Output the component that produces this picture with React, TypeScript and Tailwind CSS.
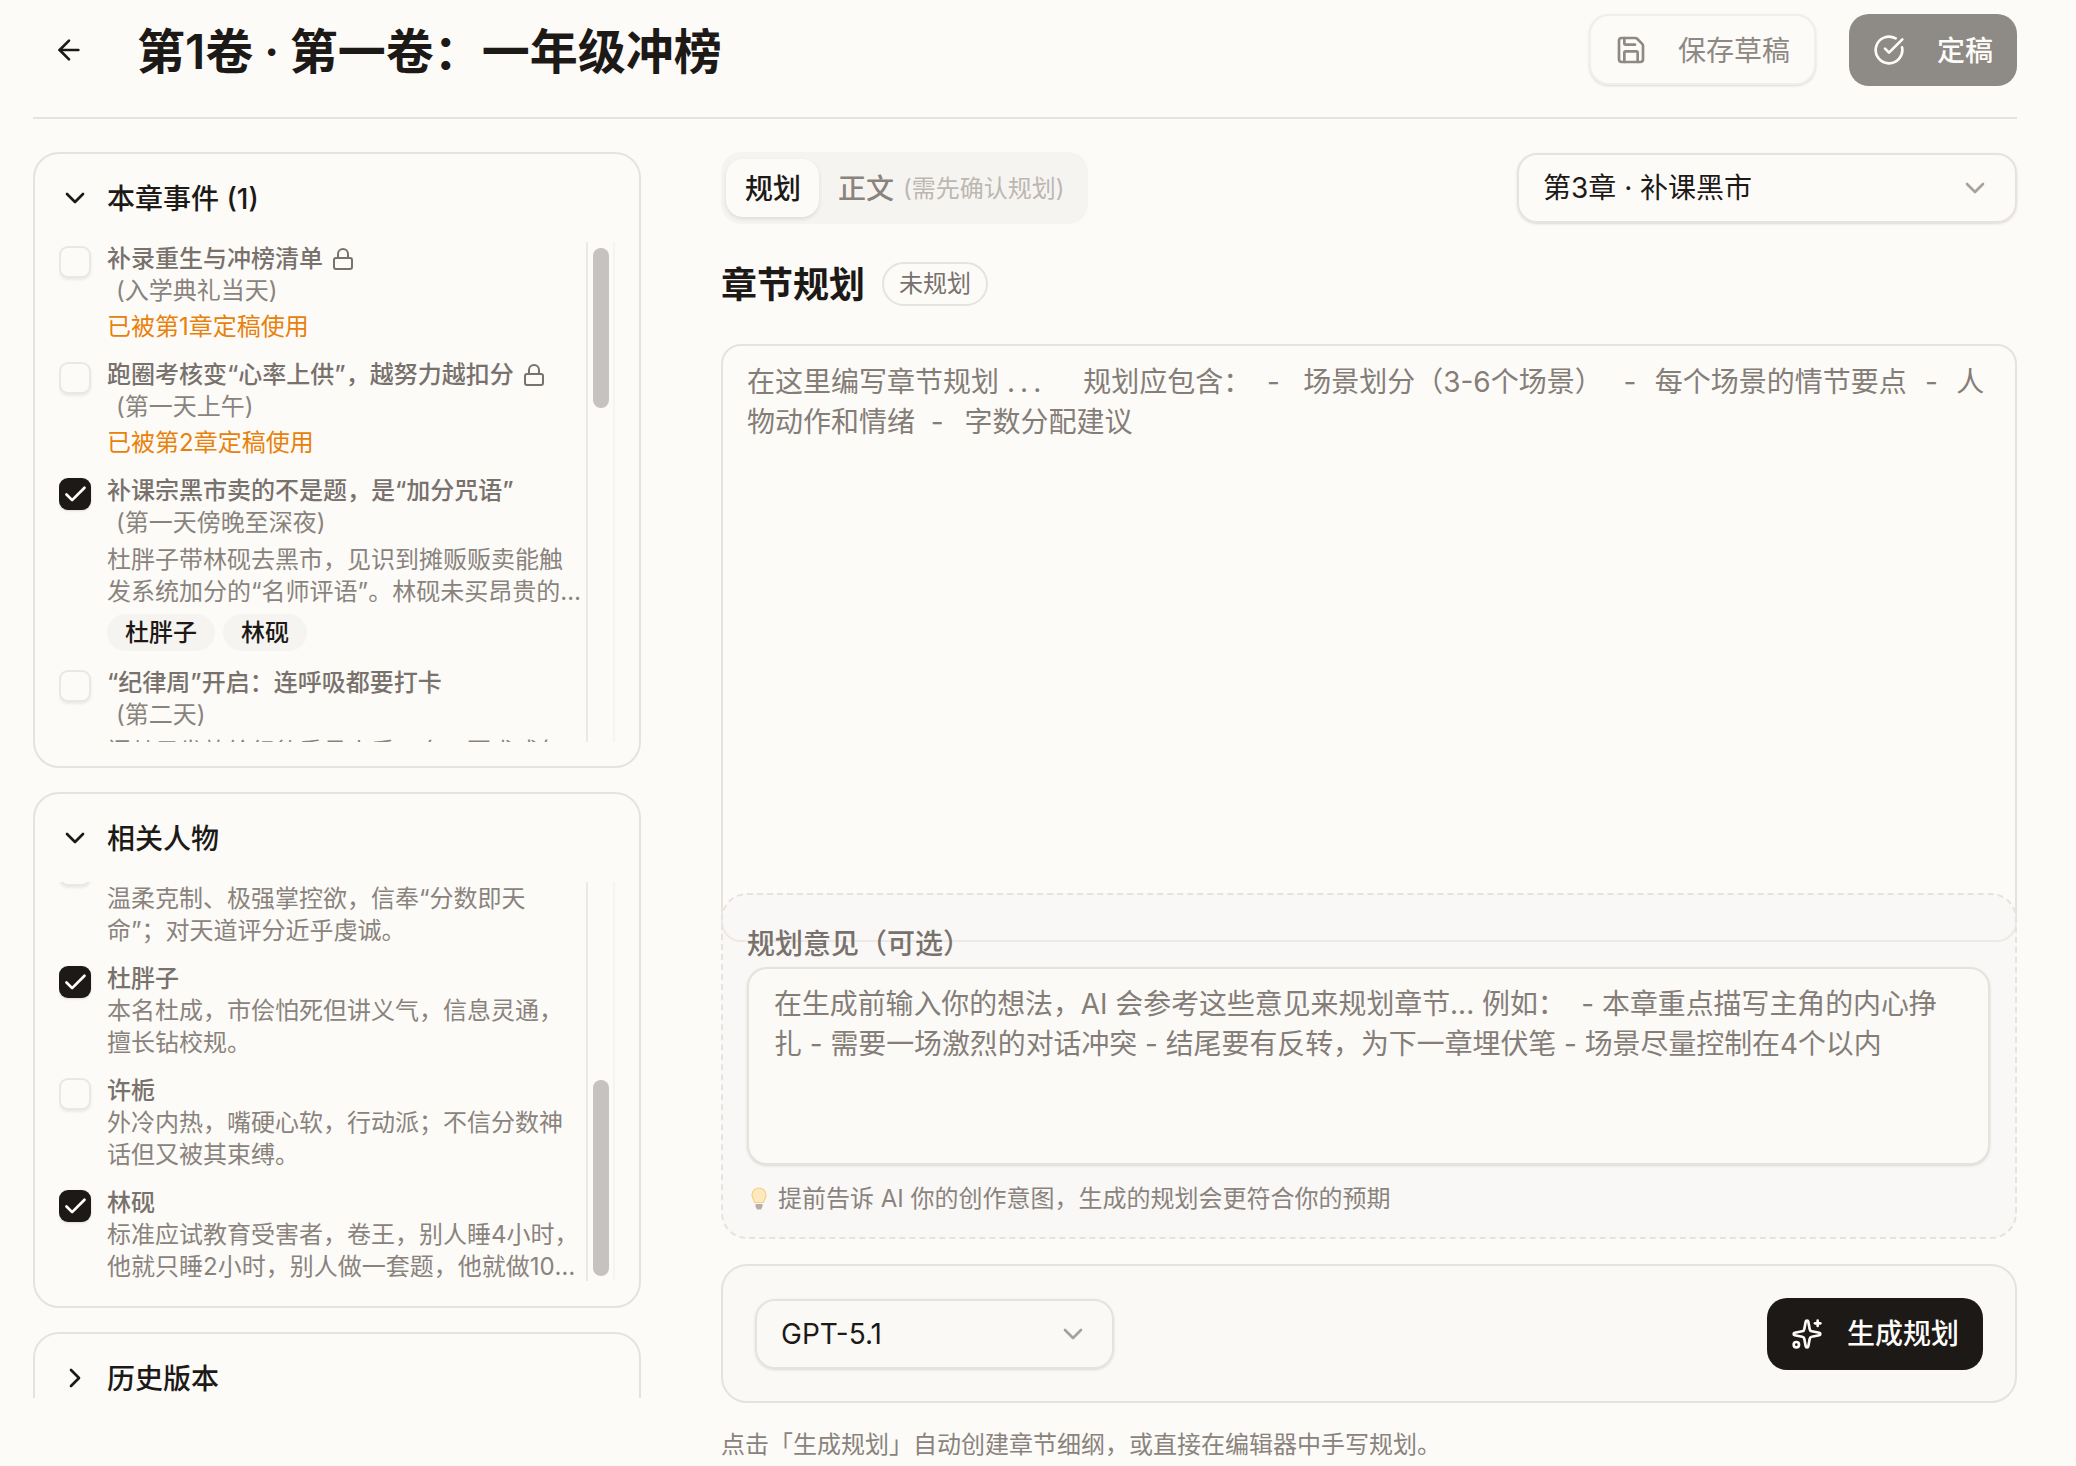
import React from "react";
import { ArrowLeft, Check, ChevronDown, ChevronRight, CircleCheckBig, Lock, Save, Sparkles } from "lucide-react";

function Box({ checked }: { checked?: boolean }) {
  return checked ? (
    <div className="mt-[3px] flex h-[32px] w-[32px] shrink-0 items-center justify-center rounded-[9px] bg-[#1c1917] text-white shadow-sm">
      <Check size={27} strokeWidth={2.4} />
    </div>
  ) : (
    <div className="mt-[3px] h-[32px] w-[32px] shrink-0 rounded-[9px] border-2 border-[#ebe7e3] bg-[#fcfbf8] shadow-[0_2px_3px_rgba(0,0,0,0.07)]" />
  );
}

function Row({ checked, children }: { checked?: boolean; children: React.ReactNode }) {
  return (
    <div className="flex gap-[16px] pb-[16px]">
      <Box checked={checked} />
      <div className="w-[478px] text-[24px] leading-[32px] text-[#8a837d]">{children}</div>
    </div>
  );
}

function Title({ children, locked }: { children: React.ReactNode; locked?: boolean }) {
  return (
    <div className="flex items-center gap-[8px] font-medium text-[#78716c]">
      <span>{children}</span>
      {locked && <Lock size={24} strokeWidth={2} className="text-[#78716c]" />}
    </div>
  );
}

function Track({ top, height }: { top: string; height: string }) {
  return (
    <div className="w-[29px] shrink-0 border-r-2 border-l-2 border-r-[#f6f4f2] border-l-[#ece9e5] pl-[5px]">
      <div className={`w-[16px] rounded-full bg-[#c6c2bf] ${top} ${height}`} />
    </div>
  );
}

function CardHead({ title, open = true }: { title: string; open?: boolean }) {
  return (
    <div className="flex h-[88px] shrink-0 items-center gap-[16px] pl-[24px] text-[28px] font-medium text-[#1c1917]">
      {open ? <ChevronDown size={32} /> : <ChevronRight size={32} />}
      <span className="pt-[2px]">{title}</span>
    </div>
  );
}

function Tag({ children }: { children: React.ReactNode }) {
  return (
    <span className="flex h-[37px] items-center rounded-full bg-[#f6f4f1] px-[18px] text-[24px] font-medium text-[#1c1917]">
      {children}
    </span>
  );
}

const editorHint =
  "在这里编写章节规划 .\u2009.\u2009.     \u200a规划应包含：  -\u2009\u200a  场景划分（3-6个场景）  \u2009-\u200a  每个场景的情节要点  \u200a-\u200a  人物动作和情绪  -\u2009  字数分配建议";

export default function App() {
  return (
    <div
      lang="zh-CN"
      className="h-[1466px] overflow-hidden bg-[#fcfbf8] pr-[59px] pl-[33px] font-['Inter','Noto_Sans_CJK_SC',sans-serif] text-[#1c1917]"
    >
      <header className="flex h-[119px] items-start justify-between border-b-2 border-[#e7e2de] pt-[14px]">
        <div className="flex h-[72px] items-center gap-[52px] pl-[20px]">
          <ArrowLeft size={32} />
          <h1 className="pt-[3px] text-[48px] font-semibold [word-spacing:-1.5px]">第1卷 · 第一卷：一年级冲榜</h1>
        </div>
        <div className="flex gap-[33px]">
          <button className="flex h-[71px] items-center gap-[31px] rounded-[20px] border-2 border-[#f1eeeb] bg-[#fcfbf8] pr-[24px] pl-[24px] text-[28px] text-[#8e8984] shadow-sm">
            <Save size={32} strokeWidth={2} />
            <span className="pt-[2px]">保存草稿</span>
          </button>
          <button className="flex h-[72px] items-center gap-[32px] rounded-[20px] bg-[#8e8a85] pr-[24px] pl-[24px] text-[28px] font-medium text-[#fcfbf8]">
            <CircleCheckBig size={32} strokeWidth={2} />
            <span className="pt-[2px]">定稿</span>
          </button>
        </div>
      </header>

      <main className="mt-[33px] flex gap-[80px]">
        <aside className="flex h-[1246px] w-[608px] shrink-0 flex-col gap-[24px] overflow-hidden">
          <section className="shrink-0 rounded-[26px] border-2 border-[#e7e2de] pb-[24px]">
            <CardHead title="本章事件 (1)" />
            <div className="flex h-[500px] pl-[24px]">
              <div className="w-[527px] overflow-hidden pt-[1px]">
                <Row>
                  <Title locked>补录重生与冲榜清单</Title>
                  <div className="ml-[9px]">(入学典礼当天)</div>
                  <div className="mt-[4px] text-[#e8810c]">已被第1章定稿使用</div>
                </Row>
                <Row>
                  <Title locked>跑圈考核变“心率上供”，越努力越扣分</Title>
                  <div className="ml-[9px]">(第一天上午)</div>
                  <div className="mt-[4px] text-[#e8810c]">已被第2章定稿使用</div>
                </Row>
                <Row checked>
                  <Title>补课宗黑市卖的不是题，是“加分咒语”</Title>
                  <div className="ml-[9px]">(第一天傍晚至深夜)</div>
                  <div className="mt-[5px] line-clamp-2">
                    杜胖子带林砚去黑市，见识到摊贩贩卖能触发系统加分的“名师评语”。林砚未买昂贵的名师评语，却记下了摊主的话术与暗号。
                  </div>
                  <div className="mt-[6px] flex gap-[8px]">
                    <Tag>杜胖子</Tag>
                    <Tag>林砚</Tag>
                  </div>
                </Row>
                <Row>
                  <Title>“纪律周”开启：连呼吸都要打卡</Title>
                  <div className="ml-[9px]">(第二天)</div>
                  <div className="mt-[5px] line-clamp-2">
                    门禁只发放给纪律委员人手一套，要求成年前评比替换所有规矩。
                  </div>
                </Row>
              </div>
              <Track top="mt-[6px]" height="h-[160px]" />
            </div>
          </section>

          <section className="shrink-0 rounded-[26px] border-2 border-[#e7e2de] pb-[25px]">
            <CardHead title="相关人物" />
            <div className="flex h-[399px] pl-[24px]">
              <div className="w-[527px] overflow-hidden">
                <div className="-mt-[31px]">
                  <Row>
                    <Title>周老师</Title>
                    <div>
                      温柔克制、极强掌控欲，信奉“分数即天
                      <br />
                      命”；对天道评分近乎虔诚。
                    </div>
                  </Row>
                  <Row checked>
                    <Title>杜胖子</Title>
                    <div>本名杜成，市侩怕死但讲义气，信息灵通，擅长钻校规。</div>
                  </Row>
                  <Row>
                    <Title>许栀</Title>
                    <div>外冷内热，嘴硬心软，行动派；不信分数神话但又被其束缚。</div>
                  </Row>
                  <Row checked>
                    <Title>林砚</Title>
                    <div className="line-clamp-2">
                      标准应试教育受害者，卷王，别人睡4小时，他就只睡2小时，别人做一套题，他就做10套题，从不敢停下来。
                    </div>
                  </Row>
                </div>
              </div>
              <Track top="mt-[198px]" height="h-[196px]" />
            </div>
          </section>

          <section className="h-[200px] shrink-0 rounded-[26px] border-2 border-[#e7e2de]">
            <CardHead title="历史版本" open={false} />
          </section>
        </aside>

        <div className="min-w-0 flex-1">
          <div className="flex items-center justify-between">
            <div className="flex h-[72px] w-[367px] items-center gap-[19px] rounded-[20px] bg-[#f6f4f1] pl-[5px]">
              <button className="flex h-[58px] w-[93px] items-center justify-center rounded-[17px] bg-[#fcfbf8] pt-[1px] pl-[1px] text-[28px] font-medium shadow-[0_2px_4px_rgba(0,0,0,0.1)]">
                规划
              </button>
              <div className="flex items-center gap-[9px] pt-[1px]">
                <span className="text-[28px] font-medium text-[#8a837d]">正文</span>
                <span className="text-[24px] text-[#bcb7b2]">(需先确认规划)</span>
              </div>
            </div>
            <div className="flex h-[70px] w-[500px] items-center justify-between rounded-[20px] border-2 border-[#e7e2de] pr-[24px] pl-[24px] text-[28px] shadow-sm">
              <span>第3章 · 补课黑市</span>
              <ChevronDown size={32} className="text-[#a8a29e]" />
            </div>
          </div>

          <div className="mt-[38px] flex h-[44px] items-center gap-[17px]">
            <h2 className="pt-[1px] text-[36px] font-semibold">章节规划</h2>
            <span className="flex h-[44px] w-[106px] items-center justify-center rounded-full border-2 border-[#e7e2de] text-[24px] text-[#78716c]">
              未规划
            </span>
          </div>

          <textarea
            readOnly
            className="mt-[38px] block h-[598px] w-full resize-none rounded-[20px] border-2 border-[#e7e2de] bg-transparent pt-[16px] pr-[22px] pl-[24px] text-[28px] leading-[40px] outline-none placeholder:text-[#857d77]"
            placeholder={editorHint}
          />

          <div className="relative -mt-[49px] h-[346px] rounded-[26px] border-2 border-dashed border-[#e7e2de] bg-[#f7f5f2]/40 pt-[29px] pr-[25px] pl-[24px]">
            <div className="text-[28px] leading-[40px] font-medium text-[#78716c]">规划意见（可选）</div>
            <textarea
              readOnly
              className="mt-[3px] block h-[198px] w-full resize-none rounded-[20px] border-2 border-[#e7e2de] bg-[#fbfaf7] pt-[15px] pr-[40px] pl-[25px] text-[27.9px] leading-[40px] shadow-sm outline-none placeholder:text-[#857d77]"
              placeholder="在生成前输入你的想法，AI 会参考这些意见来规划章节... 例如：  - 本章重点描写主角的内心挣扎 - 需要一场激烈的对话冲突 - 结尾要有反转，为下一章埋伏笔 - 场景尽量控制在4个以内"
            />
            <div className="mt-[18px] flex items-center gap-[11px] text-[24px] leading-[32px] text-[#8a837d]">
              <svg width="16" height="24" viewBox="0 0 16 24" className="ml-[4px] shrink-0">
                <path d="M8 1a7 7 0 0 0-7 7c0 3 2 4.500 2.700 7.500h8.600C13 12.500 15 11 15 8a7 7 0 0 0-7-7z" fill="#fde9bd" stroke="#f4cf86" strokeWidth="1.2" />
                <path d="M4.500 17h7v2.500l-1.500 3H6l-1.500-3z" fill="#b5aea8" />
              </svg>
              <span>提前告诉 AI 你的创作意图，生成的规划会更符合你的预期</span>
            </div>
          </div>

          <div className="mt-[25px] flex h-[139px] items-center justify-between rounded-[26px] border-2 border-[#e7e2de] bg-[#faf9f6] px-[32px]">
            <div className="flex h-[70px] w-[359px] items-center justify-between rounded-[20px] border-2 border-[#e7e2de] pr-[23px] pl-[24px] text-[28px] shadow-sm">
              <span>GPT-5.1</span>
              <ChevronDown size={32} className="text-[#a8a29e]" />
            </div>
            <button className="flex h-[72px] w-[216px] items-center justify-center gap-[24px] rounded-[20px] bg-[#1c1917] text-[28px] font-medium text-[#fcfbf8]">
              <Sparkles size={32} />
              <span>生成规划</span>
            </button>
          </div>

          <p className="mt-[26px] text-[24px] leading-[32px] text-[#8a837d]">
            点击「生成规划」自动创建章节细纲，或直接在编辑器中手写规划。
          </p>
        </div>
      </main>
    </div>
  );
}
